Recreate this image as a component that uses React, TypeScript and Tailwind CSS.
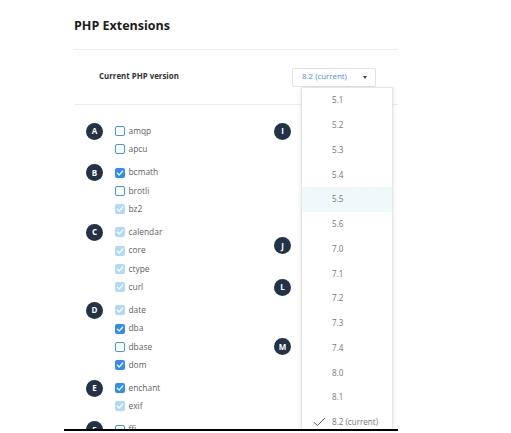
import { Fragment } from "react";

type ExtState = "off" | "on" | "locked";

interface ExtGroup {
  letter: string;
  items: [string, ExtState][];
}

const LEFT_GROUPS: ExtGroup[] = [
  { letter: "A", items: [["amqp", "off"], ["apcu", "off"]] },
  { letter: "B", items: [["bcmath", "on"], ["brotli", "off"], ["bz2", "locked"]] },
  { letter: "C", items: [["calendar", "locked"], ["core", "locked"], ["ctype", "locked"], ["curl", "locked"]] },
  { letter: "D", items: [["date", "locked"], ["dba", "on"], ["dbase", "off"], ["dom", "on"]] },
  { letter: "E", items: [["enchant", "on"], ["exif", "locked"]] },
  { letter: "F", items: [["ffi", "off"], ["fileinfo", "locked"]] },
];

const RIGHT_GROUPS: ExtGroup[] = [
  {
    letter: "I",
    items: [["igbinary", "off"], ["imagick", "on"], ["imap", "off"], ["inotify", "off"], ["intl", "on"], ["ioncube", "off"]],
  },
  { letter: "J", items: [["json", "locked"], ["jsmin", "off"]] },
  { letter: "L", items: [["ldap", "off"], ["libxml", "locked"], ["lzf", "off"]] },
  { letter: "M", items: [["mailparse", "off"], ["mbstring", "on"], ["memcache", "off"]] },
];

const VERSIONS = ["5.1", "5.2", "5.3", "5.4", "5.5", "5.6", "7.0", "7.1", "7.2", "7.3", "7.4", "8.0", "8.1", "8.2 (current)"];

function Check({ state }: { state: ExtState }) {
  if (state === "off") {
    return <span className="block h-[10px] w-[10px] shrink-0 rounded-[2px] border border-[#3d9bef] bg-white" />;
  }
  return (
    <span
      className={`flex h-[10px] w-[10px] shrink-0 items-center justify-center rounded-[2px] ${
        state === "on" ? "bg-[#2f8ff0]" : "bg-[#b3d9f8]"
      }`}
    >
      <svg width="8" height="8" viewBox="0 0 8 8" fill="none">
        <path d="M1.3 4.2 3.2 6 6.8 2" stroke="white" strokeWidth="1.2" strokeLinecap="round" strokeLinejoin="round" />
      </svg>
    </span>
  );
}

function Group({ group }: { group: ExtGroup }) {
  return (
    <div className="flex">
      <div className="flex h-[18.3px] w-[28.5px] shrink-0 items-center">
        <span className="flex h-[17px] w-[17px] items-center justify-center rounded-full bg-[#233246] text-[8px] font-bold text-white">
          {group.letter}
        </span>
      </div>
      <div className="flex flex-col">
        {group.items.map(([name, state]) => (
          <div key={name} className="flex h-[18.3px] items-center gap-[4px]">
            <Check state={state} />
            <span className="whitespace-nowrap text-[8.4px] text-[#5f5f5f]">{name}</span>
          </div>
        ))}
      </div>
    </div>
  );
}

function Column({ groups }: { groups: ExtGroup[] }) {
  return (
    <div className="flex w-[188px] shrink-0 flex-col gap-[4.8px]">
      {groups.map((g) => (
        <Group key={g.letter} group={g} />
      ))}
    </div>
  );
}

export default function App() {
  return (
    <div className="h-[433px] w-[511px] overflow-hidden bg-white" style={{ fontFamily: "'Open Sans', sans-serif" }}>
      <div className="relative ml-[64px] h-[431px] w-[334px] overflow-hidden border-b-2 border-black">
        <div className="pl-[10px]">
          {/* Header */}
          <h1 className="flex h-[49px] items-center pt-[4px] text-[12.5px] font-bold text-[#1c1c1c]">PHP Extensions</h1>
          <div className="h-px bg-[#eeeeee]" />

          {/* Version picker row */}
          <div className="flex h-[54px] items-center pl-[25px]">
            <span className="w-[193px] shrink-0 text-[7.9px] font-bold text-[#333]">Current PHP version</span>
            <div className="flex h-[19px] w-[84px] shrink-0 items-center justify-between rounded-[2px] border border-[#e3e3e3] pl-[9px] pr-[8px]">
              <span className="whitespace-nowrap text-[7.9px] text-[#4a8cf0]">8.2 (current)</span>
              <span className="h-0 w-0 border-x-[2.5px] border-t-[3px] border-x-transparent border-t-[#444]" />
            </div>
          </div>
          <div className="h-px bg-[#eeeeee]" />

          {/* Extension columns */}
          <div className="flex pl-[12px] pt-[17px]">
            {[LEFT_GROUPS, RIGHT_GROUPS].map((groups, i) => (
              <Fragment key={i}>
                <Column groups={groups} />
              </Fragment>
            ))}
          </div>
        </div>

        {/* Open version menu */}
        <div className="absolute left-[237px] top-[87px] w-[92px] border border-[#e6e6e6] bg-white shadow-[0_1px_4px_rgba(0,0,0,0.12)]">
          {VERSIONS.map((v, i) => (
            <div
              key={v}
              className={`relative flex h-[24.75px] items-center whitespace-nowrap pl-[30px] text-[8.1px] text-[#777] ${
                i === 4 ? "bg-[#eff9fc]" : ""
              }`}
            >
              {i === VERSIONS.length - 1 && (
                <svg className="absolute left-[11px]" width="13" height="10" viewBox="0 0 13 10" fill="none">
                  <path d="M1 5.2 4.3 8.6 12 1" stroke="#555" strokeWidth="1" />
                </svg>
              )}
              {v}
            </div>
          ))}
        </div>
      </div>
    </div>
  );
}
